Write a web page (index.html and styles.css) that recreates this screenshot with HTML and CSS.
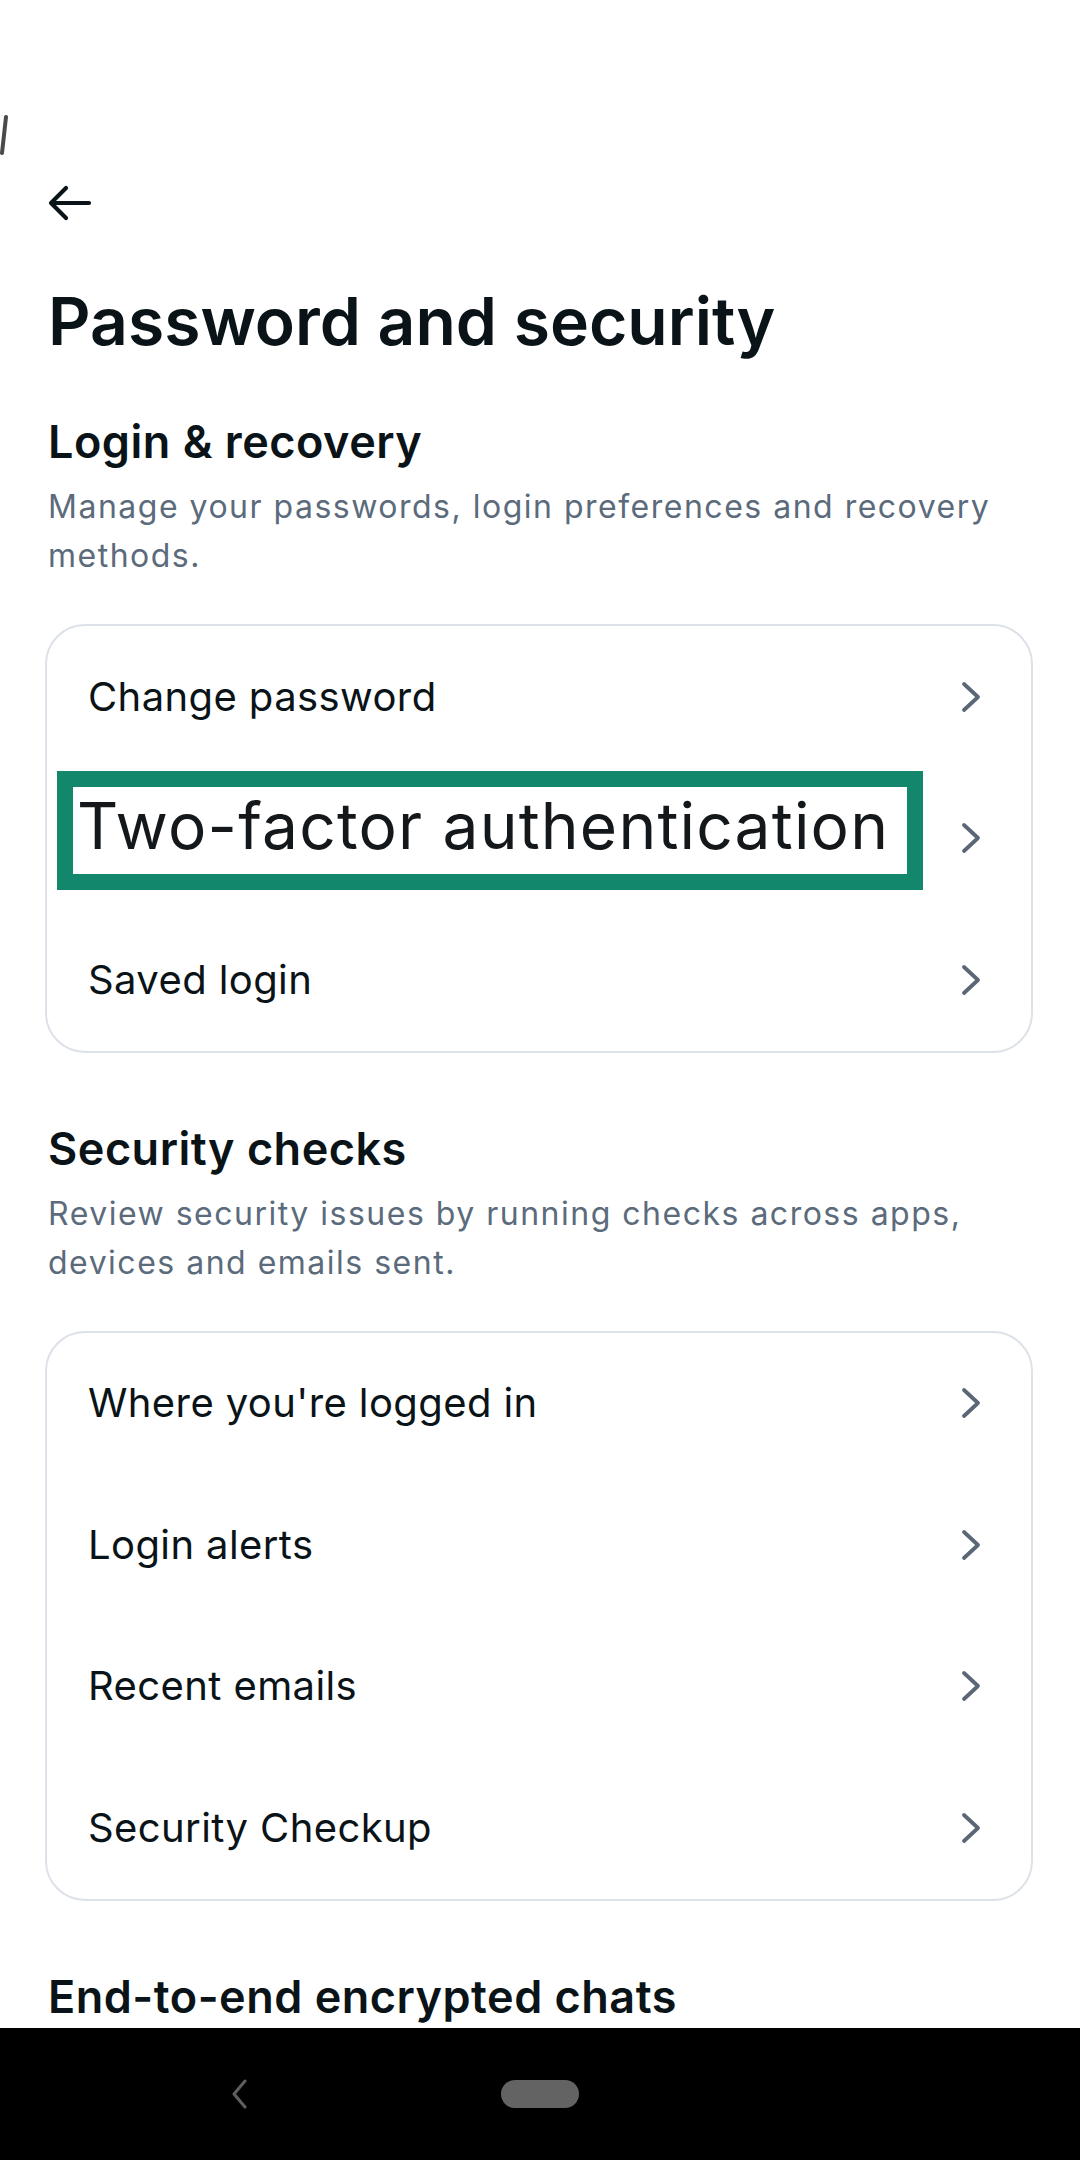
FILE: index.html
```html
<!DOCTYPE html>
<html lang="en">
<head>
<meta charset="utf-8">
<title>Password and security</title>
<link rel="stylesheet" href="styles.css">
</head>
<body>
<div class="screen">
  <svg class="edge-mark" width="8" height="40" viewBox="0 0 8 40"><path d="M6 2 L2 38" stroke="#4a4a4a" stroke-width="4" stroke-linecap="round" fill="none"/></svg>
  <main class="content">
    <div class="topbar">
      <svg class="back" width="44" height="48" viewBox="0 0 44 48"><path d="M41 24 H4 M18 9 L3 24 L18 39" stroke="#0a1317" stroke-width="4.2" stroke-linecap="round" stroke-linejoin="round" fill="none"/></svg>
    </div>
    <h1 class="title">Password and security</h1>

    <section class="section first">
      <h2 class="heading">Login &amp; recovery</h2>
      <p class="sub">Manage your passwords, login preferences and recovery methods.</p>
      <div class="card">
        <div class="row"><span class="label">Change password</span><svg class="chev" width="20" height="32" viewBox="0 0 20 32"><polyline points="3,3 17,16 3,29" /></svg></div>
        <div class="row"><span class="highlight"><span class="hl-text">Two-factor authentication</span></span><svg class="chev" width="20" height="32" viewBox="0 0 20 32"><polyline points="3,3 17,16 3,29" /></svg></div>
        <div class="row"><span class="label">Saved login</span><svg class="chev" width="20" height="32" viewBox="0 0 20 32"><polyline points="3,3 17,16 3,29" /></svg></div>
      </div>
    </section>

    <section class="section">
      <h2 class="heading">Security checks</h2>
      <p class="sub">Review security issues by running checks across apps, devices and emails sent.</p>
      <div class="card">
        <div class="row"><span class="label">Where you're logged in</span><svg class="chev" width="20" height="32" viewBox="0 0 20 32"><polyline points="3,3 17,16 3,29" /></svg></div>
        <div class="row"><span class="label">Login alerts</span><svg class="chev" width="20" height="32" viewBox="0 0 20 32"><polyline points="3,3 17,16 3,29" /></svg></div>
        <div class="row"><span class="label">Recent emails</span><svg class="chev" width="20" height="32" viewBox="0 0 20 32"><polyline points="3,3 17,16 3,29" /></svg></div>
        <div class="row"><span class="label">Security Checkup</span><svg class="chev" width="20" height="32" viewBox="0 0 20 32"><polyline points="3,3 17,16 3,29" /></svg></div>
      </div>
    </section>

    <section class="section">
      <h2 class="heading">End-to-end encrypted chats</h2>
    </section>
  </main>
  <nav class="navbar">
    <svg class="nav-back" width="20" height="30" viewBox="0 0 20 30"><polyline points="16,2 5,15 16,28" /></svg>
    <span class="pill"></span>
  </nav>
</div>
</body>
</html>
```

FILE: styles.css
```css
* { box-sizing: border-box; }
html, body { margin: 0; padding: 0; background: #ffffff; }
body {
  font-family: Inter, "Noto Sans", "Liberation Sans", sans-serif;
  color: #0a1317;
}
.screen {
  position: relative;
  width: 1080px;
  height: 2160px;
  display: flex;
  flex-direction: column;
}
.edge-mark { position: absolute; left: 0; top: 115px; }
.content {
  height: 2028px;
  overflow: hidden;
  padding: 0 47px 0 45px;
}
.topbar {
  margin-top: 179px;
  height: 48px;
  padding-left: 3px;
  display: flex;
  align-items: center;
}
.back { display: block; }
.title {
  margin: 54px 0 0 3px;
  font-size: 66px;
  line-height: 80px;
  font-weight: 600;
  letter-spacing: 0;
}
.section { margin-top: 68px; }
.section.first { margin-top: 53px; }
.heading {
  margin: 0 0 0 3px;
  font-size: 45px;
  line-height: 56px;
  font-weight: 600;
  letter-spacing: 0.5px;
}
.sub {
  margin: 12px 0 0 3px;
  font-size: 32px;
  line-height: 49px;
  color: #5b6b7c;
  font-weight: 400;
  letter-spacing: 1.5px;
}
.card {
  margin-top: 44px;
  border: 2px solid #dde1e8;
  border-radius: 40px;
  display: flex;
  flex-direction: column;
}
.row {
  position: relative;
  height: 141.5px;
  display: flex;
  align-items: center;
  justify-content: space-between;
  padding: 0 50px 0 41px;
}
.label {
  font-size: 40px;
  line-height: 48px;
  font-weight: 400;
  color: #0a1317;
  letter-spacing: 0.4px;
}
.chev { display: block; margin-left: auto; }
.chev polyline {
  fill: none;
  stroke: #5b6776;
  stroke-width: 3.8;
  stroke-linecap: round;
  stroke-linejoin: round;
}
.highlight {
  position: absolute;
  left: 10px;
  top: 3px;
  width: 866px;
  height: 119px;
  border: 16px solid #12876c;
  background: #ffffff;
  padding-left: 4px;
  display: flex;
  align-items: flex-start;
}
.hl-text {
  font-size: 64px;
  line-height: 78px;
  font-weight: 400;
  color: #14181b;
  white-space: nowrap;
  letter-spacing: 1.2px;
}
.navbar {
  height: 132px;
  background: #000000;
  display: flex;
  align-items: center;
  padding-left: 229px;
}
.nav-back { display: block; }
.nav-back polyline {
  fill: none;
  stroke: #5e5e5e;
  stroke-width: 3;
  stroke-linecap: round;
  stroke-linejoin: round;
}
.pill {
  margin-left: 252px;
  width: 78px;
  height: 28px;
  border-radius: 14px;
  background: #636363;
}
```
